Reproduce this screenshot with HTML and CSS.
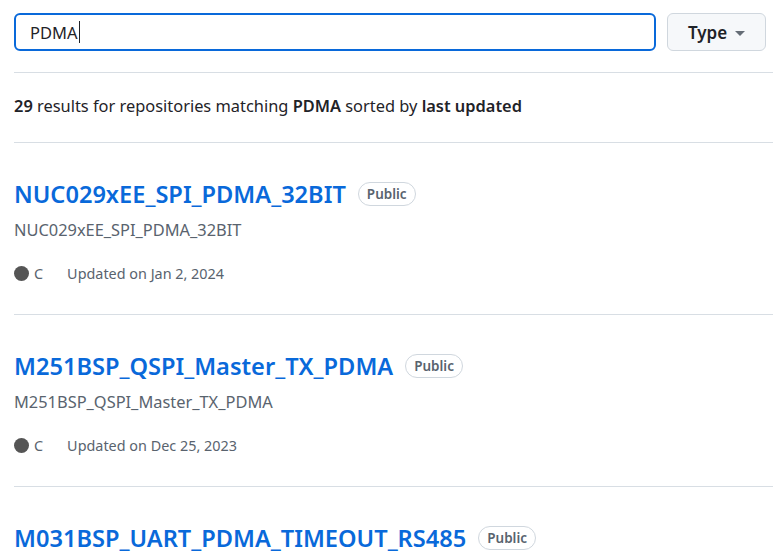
FILE: index.html
```html
<!DOCTYPE html>
<html>
<head>
<meta charset="utf-8">
<link rel="stylesheet" href="styles.css">
</head>
<body>
<div class="page">
  <div class="search-row">
    <div class="search-input">PDMA<span class="caret"></span></div>
    <button class="type-btn">Type <span class="tri"></span></button>
  </div>
  <div class="summary"><b>29</b> results for repositories matching <b>PDMA</b> sorted by <b>last updated</b></div>
  <ul class="results">
    <li class="repo">
      <div class="title-row"><a class="name">NUC029xEE_SPI_PDMA_32BIT</a><span class="badge">Public</span></div>
      <p class="desc">NUC029xEE_SPI_PDMA_32BIT</p>
      <div class="meta"><span class="lang"><span class="dot"></span>C</span><span class="updated">Updated on Jan 2, 2024</span></div>
    </li>
    <li class="repo">
      <div class="title-row"><a class="name">M251BSP_QSPI_Master_TX_PDMA</a><span class="badge">Public</span></div>
      <p class="desc">M251BSP_QSPI_Master_TX_PDMA</p>
      <div class="meta"><span class="lang"><span class="dot"></span>C</span><span class="updated">Updated on Dec 25, 2023</span></div>
    </li>
    <li class="repo">
      <div class="title-row"><a class="name">M031BSP_UART_PDMA_TIMEOUT_RS485</a><span class="badge">Public</span></div>
    </li>
  </ul>
</div>
</body>
</html>
```
FILE: styles.css
```css
* { box-sizing: border-box; }
html, body { margin: 0; padding: 0; background: #fff; }
body {
  font-family: "Segoe UI", "Noto Sans", "Open Sans", sans-serif;
  color: #1f2328;
  overflow: hidden;
}
.page { padding: 13px 0 0 14px; }
.search-row { display: flex; gap: 11px; padding-right: 7px; }
.search-input {
  flex: 1;
  height: 38px;
  border: 2px solid #0969da;
  border-radius: 6px;
  padding: 0 14px;
  display: flex;
  align-items: center;
  font-size: 16.5px;
  color: #1f2328;
}
.caret { display: inline-block; width: 1px; height: 22px; background: #1f2328; margin-left: 1px; }
.type-btn {
  width: 99px;
  height: 38px;
  border: 1px solid #d0d7de;
  border-radius: 6px;
  background: #f6f8fa;
  font-family: inherit;
  font-size: 17px;
  font-weight: 600;
  color: #1f2328;
  display: flex;
  align-items: center;
  justify-content: center;
  gap: 8px;
  padding: 0;
}
.tri { width: 0; height: 0; border-left: 5px solid transparent; border-right: 5px solid transparent; border-top: 5px solid #656d76; margin-top: 2px; }
.summary {
  margin-top: 21px;
  border-top: 1px solid #d8dee4;
  padding: 20px 0 23px;
  font-size: 16.4px;
  line-height: 26px;
  color: #1f2328;
}
.summary b { font-weight: 600; }
.results { list-style: none; margin: 0; padding: 0; }
.repo { border-top: 1px solid #d8dee4; padding: 36px 0 30px; }
.title-row { display: flex; align-items: center; gap: 12px; height: 30px; }
.name { color: #0969da; font-size: 23.6px; font-weight: 600; text-decoration: none; }
.badge {
  border: 1px solid #d0d7de;
  border-radius: 12px;
  font-size: 13.5px;
  font-weight: 600;
  color: #59636e;
  padding: 0 8px;
  height: 24px;
  line-height: 22px;
}
.desc { margin: 8px 0 0; font-size: 16.4px; line-height: 26px; color: #59636e; }
.meta { margin-top: 19px; display: flex; align-items: center; gap: 24px; font-size: 14.4px; color: #59636e; height: 22px; }
.lang { display: flex; align-items: center; gap: 5px; }
.dot { width: 15px; height: 15px; border-radius: 50%; background: #555555; }
```
